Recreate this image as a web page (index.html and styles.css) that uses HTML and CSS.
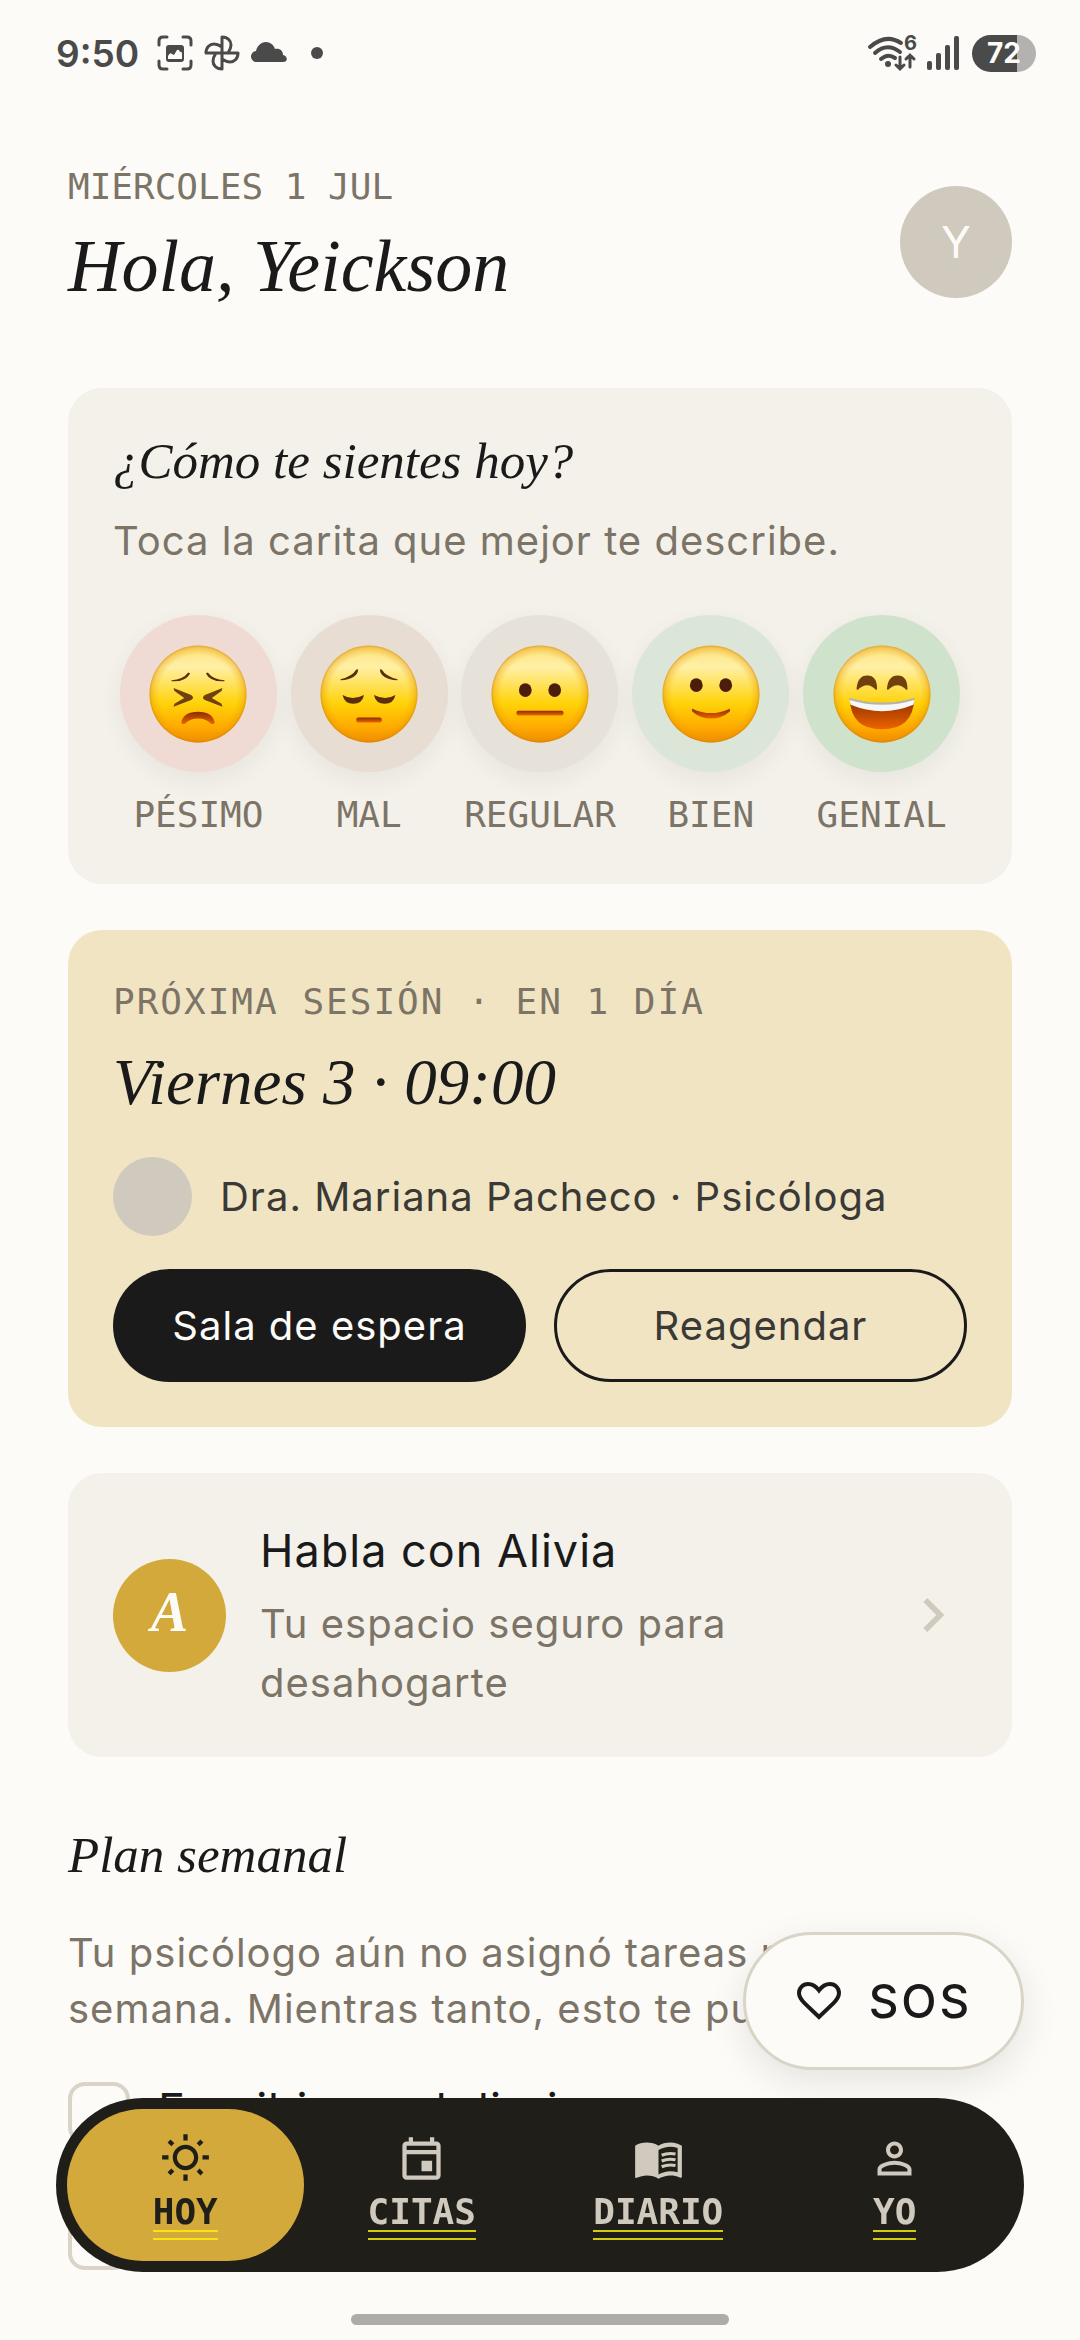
FILE: index.html
```html
<!DOCTYPE html>
<html lang="es">
<head>
<meta charset="utf-8">
<meta name="viewport" content="width=device-width, initial-scale=1">
<title>Alivia · Hoy</title>
<link rel="stylesheet" href="styles.css">
</head>
<body>
<svg class="defs" aria-hidden="true">
  <defs>
    <linearGradient id="skin" x1="0" y1="0" x2="0" y2="1">
      <stop offset="0" stop-color="#fbe27a"/>
      <stop offset="0.22" stop-color="#fff0a6"/>
      <stop offset="0.6" stop-color="#ffd208"/>
      <stop offset="0.84" stop-color="#ffab00"/>
      <stop offset="1" stop-color="#f28c00"/>
    </linearGradient>
    <radialGradient id="edge" cx="0.5" cy="0.5" r="0.5">
      <stop offset="0.8" stop-color="#f0a000" stop-opacity="0"/>
      <stop offset="0.95" stop-color="#e89400" stop-opacity="0.35"/>
      <stop offset="1" stop-color="#c87a10" stop-opacity="0.6"/>
    </radialGradient>
    <linearGradient id="mouth" x1="0" y1="0" x2="0" y2="1">
      <stop offset="0" stop-color="#8a2c00"/>
      <stop offset="1" stop-color="#ee6400"/>
    </linearGradient>
    <g id="face">
      <circle cx="50" cy="50" r="49.500" fill="url(#skin)"/>
      <circle cx="50" cy="50" r="49.500" fill="url(#edge)"/>
    </g>
  </defs>
</svg>

<header class="status">
  <div class="status-group">
    <span class="clock">9:50</span>
    <svg class="s-icon" viewBox="0 0 36 36" fill="none" stroke="#4a4a4a" stroke-width="3" stroke-linecap="round">
      <path d="M2 10V6q0-4 4-4h4M26 2h4q4 0 4 4v4M34 26v4q0 4-4 4h-4M10 34H6q-4 0-4-4v-4"/>
      <rect x="9" y="10" width="18" height="17" rx="3" fill="#4a4a4a" stroke="none"/>
      <path d="M11 24v-3q2-4 4-2l2 1 3-5q2-1 3 2 2-1 2 2v5z" fill="#fcfbf7" stroke="none"/>
    </svg>
    <svg class="s-icon" viewBox="0 0 36 36" fill="none" stroke="#4a4a4a" stroke-width="3" stroke-linejoin="round">
      <path d="M18 18V2c6 0 9 4 9 8 0 3-1 5-3 8M18 18h16c0 6-4 9-8 9-3 0-5-1-8-3M18 18v16c-6 0-9-4-9-8 0-3 1-5 3-8M18 18H2c0-6 4-9 8-9 3 0 5 1 8 3"/>
    </svg>
    <svg class="s-icon" viewBox="0 0 36 36" fill="#4a4a4a"><path d="M6 27a5.500 5.500 0 0 1-1-11c1-5 5-9 10-9 4 0 8 3 9 7 5-1 8 2 8 6 5 1 5 7 0 7z"/></svg>
    <svg class="s-icon" viewBox="0 0 36 36" fill="#4a4a4a"><circle cx="19" cy="18" r="6"/></svg>
  </div>
  <div class="status-group">
    <svg class="wifi" viewBox="0 0 48 36" fill="none" stroke="#4a4a4a" stroke-width="4" stroke-linecap="round">
      <path d="M2 12q16-14 31-4M7 18q12-11 25-1M13 24q7-6 14-1"/>
      <circle cx="20" cy="29" r="3" fill="#4a4a4a" stroke="none"/>
      <path d="M32 22v12m-4-4 4 4 4-4M42 32V20m-4 4 4-4 4 4" stroke-width="3"/>
      <text x="36" y="15" class="wifi-gen">6</text>
    </svg>
    <svg class="signal" viewBox="0 0 32 36" fill="#4a4a4a">
      <rect x="0" y="26" width="5" height="9" rx="2"/><rect x="9" y="18" width="5" height="17" rx="2"/><rect x="18" y="10" width="5" height="25" rx="2"/><rect x="27" y="1" width="5" height="34" rx="2"/>
    </svg>
    <span class="battery">72</span>
  </div>
</header>

<main class="page">
  <section class="hello">
    <div class="hello-text">
      <p class="eyebrow">MIÉRCOLES 1 JUL</p>
      <h1 class="greeting">Hola, Yeickson</h1>
    </div>
    <button class="avatar" type="button">Y</button>
  </section>

  <section class="card mood">
    <h2 class="card-title">¿Cómo te sientes hoy?</h2>
    <p class="body mood-hint">Toca la carita que mejor te describe.</p>
    <div class="mood-row">
      <button class="mood-option" type="button">
        <span class="mood-disc awful">
          <svg class="emoji" viewBox="0 0 100 100"><use href="#face"/>
            <g fill="#5c2f08"><path d="M23 36q12-1 17-8l2 1q-5 9-19 8zM77 36q-12-1-17-8l-2 1q5 9 19 8z"/><path d="M25 44l18 7q4 3 0 5l-18 7 1-3 10-6-10-7zM75 44l-18 7q-4 3 0 5l18 7-1-3-10-6 10-7z" fill="#71400f"/></g>
            <path d="M33 79q2-11 17-11t17 11q-1 3-4 1-5-5-13-5t-13 5q-3 2-4-1z" fill="url(#mouth)"/>
          </svg>
        </span>
        <span class="mono">PÉSIMO</span>
      </button>
      <button class="mood-option" type="button">
        <span class="mood-disc bad">
          <svg class="emoji" viewBox="0 0 100 100"><use href="#face"/>
            <path d="M21 35q12-3 16-10l2 0q-1 10-18 11zM79 35q-12-3-16-10l-2 0q1 10 18 11zM23 51q10 6 22 0-2 9-11 9t-11-9zM77 51q-10 6-22 0 2 9 11 9t11-9z" fill="#5a2f0a"/>
            <rect x="37" y="74" width="26" height="5" rx="2" fill="url(#mouth)"/>
          </svg>
        </span>
        <span class="mono">MAL</span>
      </button>
      <button class="mood-option" type="button">
        <span class="mood-disc okay">
          <svg class="emoji" viewBox="0 0 100 100"><use href="#face"/>
            <g fill="#4d1d0c"><ellipse cx="35" cy="46" rx="6.500" ry="7"/><ellipse cx="65" cy="46" rx="6.500" ry="7"/></g>
            <rect x="26" y="67" width="48" height="5" rx="2" fill="url(#mouth)"/>
          </svg>
        </span>
        <span class="mono">REGULAR</span>
      </button>
      <button class="mood-option" type="button">
        <span class="mood-disc good">
          <svg class="emoji" viewBox="0 0 100 100"><use href="#face"/>
            <g fill="#4d1d0c"><ellipse cx="35" cy="41" rx="6.500" ry="7"/><ellipse cx="65" cy="41" rx="6.500" ry="7"/></g>
            <path d="M31 65q19 9 38 0 1 1 0 3-8 7-19 7t-19-7q-1-2 0-3z" fill="url(#mouth)"/>
          </svg>
        </span>
        <span class="mono">BIEN</span>
      </button>
      <button class="mood-option" type="button">
        <span class="mood-disc great">
          <svg class="emoji" viewBox="0 0 100 100"><use href="#face"/>
            <path d="M24 45q1-14 11-14t10 14l-1 1q-9-10-19 0zM55 45q1-14 11-14t10 14l-1 1q-9-10-19 0z" fill="#71400f"/>
            <path d="M17 54q33 10 66 0-1 32-33 32T17 54z" fill="url(#mouth)"/>
            <path d="M17 54q33 10 66 0 0 5-1 7-32 13-64 0-1-2-1-7z" fill="#f7f7f7"/>
            <path d="M17 54q33 10 66 0v2q-33 10-66 0z" fill="#b4b4a8"/>
          </svg>
        </span>
        <span class="mono">GENIAL</span>
      </button>
    </div>
  </section>

  <section class="card session">
    <p class="eyebrow session-label">PRÓXIMA SESIÓN · EN 1 DÍA</p>
    <h2 class="session-time">Viernes 3 · 09:00</h2>
    <div class="doctor"><span class="doctor-photo"></span><span class="body">Dra. Mariana Pacheco · Psicóloga</span></div>
    <div class="actions">
      <button class="pill solid" type="button">Sala de espera</button>
      <button class="pill outline" type="button">Reagendar</button>
    </div>
  </section>

  <a class="card chat" href="#alivia">
    <span class="chat-logo">A</span>
    <span class="chat-text">
      <span class="chat-title">Habla con Alivia</span>
      <span class="chat-sub">Tu espacio seguro para desahogarte</span>
    </span>
    <svg class="chevron" viewBox="0 0 24 24"><path d="M10 6 8.590 7.410 13.170 12l-4.580 4.590L10 18l6-6z" fill="#d0c9be"/></svg>
  </a>

  <section class="plan">
    <h2 class="card-title">Plan semanal</h2>
    <p class="body plan-note">Tu psicólogo aún no asignó tareas para esta semana. Mientras tanto, esto te puede ayudar:</p>
    <div class="tasks">
      <label class="task"><input class="check" type="checkbox"><span>Escribir en el diario</span></label>
      <label class="task"><input class="check" type="checkbox" aria-label="Tarea"></label>
    </div>
  </section>
</main>

<button class="sos" type="button">
  <svg class="sos-icon" viewBox="0 0 24 24" fill="none" stroke="#1a1a1a" stroke-width="2"><path d="M12 20 5 13.300C2.500 10.900 2 9.500 2 8 2 5.500 4 3.500 6.500 3.500c2.600 0 4.200 1.400 5.500 3.200C13.300 4.900 14.900 3.500 17.500 3.500 20 3.500 22 5.500 22 8c0 1.500-.5 2.900-3 5.300z"/></svg>
  SOS
</button>

<nav class="tabs">
  <a class="tab active" href="#hoy">
    <svg class="tab-icon" viewBox="0 0 24 24"><path d="M6.760 4.840l-1.800-1.790-1.410 1.410 1.790 1.790 1.420-1.410zM4 10.500H1v2h3v-2zm9-9.950h-2V3.500h2V.55zm7.450 3.910l-1.410-1.410-1.790 1.790 1.410 1.410 1.790-1.790zm-3.210 13.700l1.790 1.800 1.410-1.410-1.800-1.790-1.400 1.400zM20 10.500v2h3v-2h-3zm-8-5c-3.310 0-6 2.690-6 6s2.690 6 6 6 6-2.690 6-6-2.690-6-6-6zm0 10c-2.210 0-4-1.790-4-4s1.790-4 4-4 4 1.790 4 4-1.790 4-4 4zm-1 6.950h2V19.500h-2v2.950zm-7.450-3.960l1.410 1.410 1.790-1.800-1.410-1.410-1.790 1.800z"/></svg>
    <span class="tab-label">HOY</span>
  </a>
  <a class="tab" href="#citas">
    <svg class="tab-icon" viewBox="0 0 24 24"><path d="M19 4h-1V2h-2v2H8V2H6v2H5c-1.110 0-1.990.9-1.990 2L3 20c0 1.100.89 2 2 2h14c1.100 0 2-.9 2-2V6c0-1.100-.9-2-2-2zm0 16H5V10h14v10zm0-12H5V6h14v2zm-7 5h5v5h-5v-5z"/></svg>
    <span class="tab-label">CITAS</span>
  </a>
  <a class="tab" href="#diario">
    <svg class="tab-icon" viewBox="0 0 24 24"><path d="M21 5c-1.110-.35-2.330-.5-3.500-.5-1.950 0-4.050.4-5.500 1.500-1.450-1.100-3.550-1.500-5.500-1.500S2.450 4.900 1 6v14.650c0 .25.25.5.5.5.1 0 .15-.05.25-.05C3.100 20.450 5.050 20 6.500 20c1.950 0 4.050.4 5.500 1.500 1.350-.85 3.800-1.500 5.500-1.500 1.650 0 3.350.3 4.750 1.050.1.050.15.050.25.050.25 0 .5-.25.5-.5V6c-.6-.45-1.250-.75-2-1zm0 13.500c-1.100-.35-2.300-.5-3.500-.5-1.700 0-4.150.65-5.500 1.500V8c1.350-.85 3.800-1.500 5.500-1.500 1.200 0 2.400.15 3.500.5v11.500z"/><path d="M13.500 10.500q3-1.300 6.500-.6M13.500 13.200q3-1.300 6.500-.6M13.500 15.900q3-1.300 6.500-.6" fill="none" stroke="currentColor" stroke-width="1.500"/></svg>
    <span class="tab-label">DIARIO</span>
  </a>
  <a class="tab" href="#yo">
    <svg class="tab-icon" viewBox="0 0 24 24"><path d="M12 5.900c1.160 0 2.100.94 2.100 2.100s-.94 2.100-2.100 2.100S9.900 9.160 9.900 8s.94-2.100 2.100-2.100m0 9c2.970 0 6.100 1.460 6.100 2.100v1.100H5.900V17c0-.64 3.130-2.100 6.100-2.100M12 4C9.790 4 8 5.790 8 8s1.790 4 4 4 4-1.790 4-4-1.790-4-4-4zm0 9c-2.670 0-8 1.340-8 4v3h16v-3c0-2.660-5.330-4-8-4z"/></svg>
    <span class="tab-label">YO</span>
  </a>
</nav>
<div class="home-bar"></div>
</body>
</html>
```
FILE: styles.css
```css
* { box-sizing: border-box; }

body {
  margin: 0;
  min-height: 100vh;
  background: #fcfbf7;
  color: #1a1a1a;
  font-family: Inter, sans-serif;
  font-size: 40px;
}

h1, h2, p { margin: 0; }
button { font: inherit; color: inherit; border: 0; padding: 0; background: none; }
a { color: inherit; text-decoration: none; }
svg { display: block; flex: none; }
.defs { position: absolute; width: 0; height: 0; }

/* Status bar */
.status {
  display: flex;
  justify-content: space-between;
  align-items: center;
  height: 106px;
  padding: 0 44px 0 56px;
  color: #4a4a4a;
}
.status-group { display: flex; align-items: center; gap: 11px; }
.clock { font-size: 37px; font-weight: 600; margin-right: 7px; }
.s-icon { width: 36px; height: 36px; }
.wifi { width: 48px; height: 36px; overflow: visible; }
.wifi-gen { font-size: 20px; font-weight: 700; fill: #4a4a4a; stroke: none; }
.signal { width: 32px; height: 36px; }
.battery {
  display: grid;
  place-items: center;
  width: 64px;
  height: 37px;
  margin-left: 2px;
  border-radius: 19px;
  background: linear-gradient(90deg, #4a4a4a 71%, #b3b2b0 71%);
  color: #fcfbf7;
  font-size: 28px;
  font-weight: 700;
}

/* Page */
.page { padding: 58px 68px 40px; }

.hello { display: flex; justify-content: space-between; align-items: center; margin-bottom: 68px; }
.hello-text { display: grid; gap: 2px; }
.eyebrow, .mono, .tab-label { font-family: "DejaVu Sans Mono", monospace; font-size: 36px; }
.eyebrow { color: #7c7467; line-height: 46px; }
.greeting, .card-title, .session-time, .chat-logo {
  font-family: "Liberation Serif", serif;
  font-style: italic;
  font-weight: 400;
}
.greeting { font-size: 74px; line-height: 108px; }
.avatar {
  width: 112px;
  height: 112px;
  border-radius: 50%;
  background: #d0c9be;
  color: #fcfbf7;
  font-size: 44px;
}

.card {
  display: block;
  margin-bottom: 46px;
  padding: 45px;
  border-radius: 34px;
  background: #f4f1ea;
}
.card-title { font-size: 51px; line-height: 56px; }
.body { color: #7c7467; font-size: 40px; line-height: 56px; letter-spacing: 1px; }

/* Mood picker */
.mood-hint { margin: 24px 0 46px; }
.mood-row { display: grid; grid-template-columns: repeat(5, 1fr); }
.mood-option { display: flex; flex-direction: column; align-items: center; gap: 19px; }
.mood-disc {
  display: grid;
  place-items: center;
  width: 157px;
  height: 157px;
  border-radius: 50%;
  box-shadow: 0 8px 24px rgba(26, 26, 26, 0.06);
}
.awful { background: #f0dad4; }
.bad { background: #e7ddd2; }
.okay { background: #e6e2da; }
.good { background: #dbe6d9; }
.great { background: #cfe3cc; }
.emoji { width: 98px; height: 98px; }
.mono { color: #7c7467; line-height: 48px; }

/* Next session */
.session { background: #f0e4c2; }
.session-label { line-height: 54px; letter-spacing: 2px; }
.session-time { margin: 18px 0 40px; font-size: 65px; line-height: 70px; }
.doctor { display: flex; align-items: center; gap: 28px; }
.doctor .body { color: #3a3935; }
.doctor-photo { width: 79px; height: 79px; border-radius: 50%; background: #d0c9be; }
.actions { display: grid; grid-template-columns: 1fr 1fr; gap: 28px; margin-top: 33px; }
.pill { height: 113px; border-radius: 57px; font-size: 40px; letter-spacing: 1px; }
.solid { background: #1a1a1a; color: #fcfbf7; }
.outline { border: 3px solid #1a1a1a; color: #3a3935; }

/* Chat entry */
.chat { display: flex; align-items: center; }
.chat-logo {
  display: grid;
  place-items: center;
  flex: none;
  width: 113px;
  height: 113px;
  padding-bottom: 6px;
  border-radius: 50%;
  background: #d2a93a;
  color: #fcfbf7;
  font-size: 56px;
  font-weight: 700;
}
.chat-text { display: grid; flex: 1; gap: 10px; margin: 0 100px 0 34px; }
.chat-title { font-size: 45px; line-height: 66px; letter-spacing: 1px; }
.chat-sub { color: #7c7467; font-size: 40px; line-height: 59px; letter-spacing: 1px; }
.chevron { width: 68px; height: 68px; }

/* Weekly plan */
.plan { padding-top: 24px; }
.plan-note { margin: 42px 0 45px; }
.tasks { display: grid; gap: 64px; }
.task {
  display: flex;
  align-items: flex-start;
  gap: 28px;
  height: 62px;
  font-size: 45px;
  line-height: 56px;
  letter-spacing: 1px;
}
.check {
  appearance: none;
  width: 62px;
  height: 62px;
  margin: 0;
  border: 4px solid #d9d4c7;
  border-radius: 17px;
}

/* Floating controls */
.sos {
  position: fixed;
  right: 56px;
  bottom: 270px;
  display: flex;
  align-items: center;
  justify-content: center;
  gap: 26px;
  width: 281px;
  height: 138px;
  border: 3px solid #d9d4c7;
  border-radius: 69px;
  background: #fcfbf7;
  box-shadow: 0 12px 36px rgba(26, 26, 26, 0.1);
  font-size: 46px;
  font-weight: 500;
  letter-spacing: 3px;
}
.sos-icon { width: 48px; height: 48px; }

.tabs {
  position: fixed;
  left: 56px;
  right: 56px;
  bottom: 68px;
  display: grid;
  grid-template-columns: repeat(4, 1fr);
  height: 174px;
  padding: 11px;
  border-radius: 87px;
  background: #1f1e19;
}
.tab {
  display: flex;
  flex-direction: column;
  align-items: center;
  padding-top: 24px;
  border-radius: 76px;
  color: #d0c9be;
}
.tab.active { background: #d2a93a; color: #1f1e19; }
.tab-icon { width: 51px; height: 51px; fill: currentColor; }
.tab-label { margin-top: 10px; font-weight: 700; line-height: 36px; }
.tab-label::after {
  content: "";
  display: block;
  height: 6px;
  border: solid #d2cb10;
  border-width: 2px 0;
}
.active .tab-label::after { border-color: #f5e313; }

.home-bar {
  position: fixed;
  left: 50%;
  bottom: 15px;
  width: 35%;
  height: 11px;
  border-radius: 6px;
  background: #adaca8;
  transform: translateX(-50%);
}
```
